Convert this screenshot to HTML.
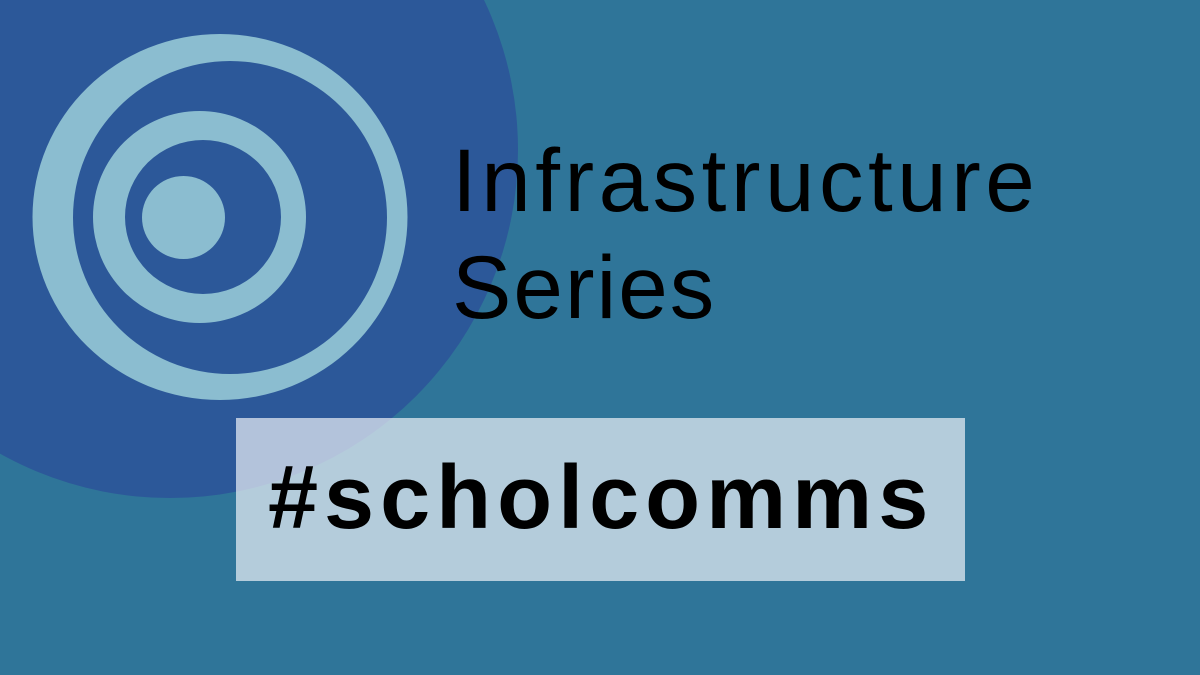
<!DOCTYPE html>
<html><head><meta charset="utf-8"><style>
html,body{margin:0;padding:0}
body{width:1200px;height:675px;overflow:hidden;background:#2f7599;position:relative;font-family:"Liberation Sans",sans-serif}
svg{position:absolute;left:0;top:0}
.t{position:absolute;left:452px;font-size:89px;color:#000;letter-spacing:4.5px;line-height:1;white-space:nowrap}
.box{position:absolute;left:236px;top:418px;width:729px;height:163px;background:rgba(240,244,249,0.69)}
.h{position:absolute;left:268px;top:498px;font-size:90px;font-weight:bold;letter-spacing:6px;line-height:0;white-space:nowrap;color:#000}
</style></head><body>
<svg width="1200" height="675">
<circle cx="170" cy="150" r="348" fill="#2c5899"/>
<path fill="#8bbdd0" fill-rule="evenodd" d="M32.5,217a187.5,183 0 1,0 375,0a187.5,183 0 1,0 -375,0Z M73,217.5a157,156.5 0 1,0 314,0a157,156.5 0 1,0 -314,0Z"/>
<path fill="#8bbdd0" fill-rule="evenodd" d="M93,217a106.5,106 0 1,0 213,0a106.5,106 0 1,0 -213,0Z M125,217a78,77 0 1,0 156,0a78,77 0 1,0 -156,0Z"/>
<circle cx="183.5" cy="217.5" r="41.5" fill="#8bbdd0"/>
</svg>
<div class="t" style="top:136px">Infrastructure</div>
<div class="t" style="top:243px;letter-spacing:2px">Series</div>
<div class="box"></div>
<div class="h">#scholcomms</div>
</body></html>
